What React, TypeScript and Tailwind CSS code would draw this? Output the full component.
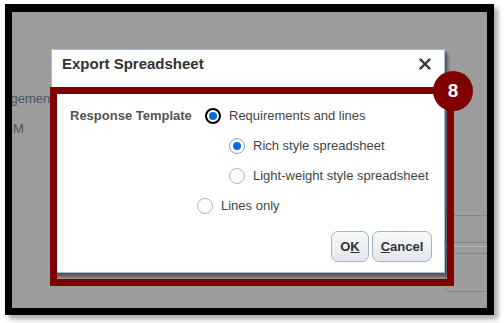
import React from "react";

function Radio({ checked, focused }: { checked?: boolean; focused?: boolean }) {
  const border = focused
    ? "border-2 border-black"
    : checked
    ? "border border-[#8ea2b6]"
    : "border border-[#aab6c2]";
  return (
    <span
      className={`flex h-[16px] w-[16px] shrink-0 items-center justify-center rounded-full bg-white ${border}`}
    >
      {checked && <span className="h-[8px] w-[8px] rounded-full bg-[#0a6cd6]" />}
    </span>
  );
}

export default function App() {
  return (
    <div
      className="h-[323px] w-[504px] overflow-hidden bg-white pt-[4px] pl-[5px]"
      style={{ fontFamily: '"Liberation Sans", Arial, sans-serif' }}
    >
      <div className="h-[311px] w-[489px] border-[7px] border-t-[8px] border-black shadow-[4px_4px_5px_rgba(0,0,0,0.35)]">
        <div className="relative h-full w-full overflow-hidden bg-[#9c9c9c]">
          {/* background page content */}
          <div className="flex h-full justify-between">
            <div className="flex flex-col pt-[79px] text-[13px] leading-[16px] text-[#4b5561]">
              <span className="ml-[-34px] whitespace-nowrap">Management</span>
              <span className="ml-[1px] mt-[14px]">M</span>
            </div>
            <div className="flex w-[42px] flex-col pt-[203px]">
              <div className="h-[28px] border-l border-t border-b border-[#858585]" />
              <div className="mt-[3px] h-[7px] border-t border-[#b3b3b3]" />
              <div className="h-[39px] rounded-bl-[5px] border-l border-b border-t border-[#858585]" />
            </div>
          </div>

          {/* dialog */}
          <div className="absolute left-[39px] top-[37px] flex w-[394px] flex-col border border-[#a9bccd] bg-white shadow-[3px_4px_3px_rgba(0,0,0,0.45)]">
            <div className="flex h-[37px] items-start justify-between pl-[10px] pr-[13px] pt-[5px]">
              <span className="text-[15px] font-bold leading-[18px] text-[#333]">Export Spreadsheet</span>
              <svg width="12" height="12" viewBox="0 0 12 12" className="mt-[3px]">
                <path d="M1.5 1.5 L10.5 10.5 M10.5 1.5 L1.5 10.5" stroke="#333" strokeWidth="2.4" strokeLinecap="round" />
              </svg>
            </div>
            <div className="flex flex-col pl-[18px] pr-[12px] pt-[14px] pb-[10px] text-[13px] leading-[16px] text-[#444]">
              <div className="flex h-[30px] items-center">
                <span className="w-[135px] font-bold text-[#555]">Response Template</span>
                <Radio checked focused />
                <span className="ml-[8px]">Requirements and lines</span>
              </div>
              <div className="ml-[159px] flex h-[30px] items-center">
                <Radio checked />
                <span className="ml-[8px]">Rich style spreadsheet</span>
              </div>
              <div className="ml-[159px] flex h-[30px] items-center">
                <Radio />
                <span className="ml-[8px]">Light-weight style spreadsheet</span>
              </div>
              <div className="ml-[127px] flex h-[30px] items-center">
                <Radio />
                <span className="ml-[8px]">Lines only</span>
              </div>
              <div className="mt-[10px] flex justify-end gap-[3px]">
                <button className="flex h-[31px] w-[38px] items-center justify-center rounded-[7px] border border-[#a3b3c3] bg-gradient-to-b from-[#f7f9fb] to-[#e3e8ed] text-[13px] font-bold text-[#333]">
                  O<span className="underline">K</span>
                </button>
                <button className="flex h-[31px] w-[60px] items-center justify-center rounded-[7px] border border-[#a3b3c3] bg-gradient-to-b from-[#f7f9fb] to-[#e3e8ed] text-[13px] font-bold text-[#333]">
                  <span className="underline">C</span>ancel
                </button>
              </div>
            </div>
          </div>

          {/* highlight box */}
          <div className="absolute left-[38px] top-[75px] h-[199px] w-[404px] border-[7px] border-[#800000]" />
          <div className="absolute left-[421px] top-[59px] flex h-[40px] w-[40px] items-center justify-center rounded-full bg-[#800000] text-[19px] font-bold text-white">
            8
          </div>
        </div>
      </div>
    </div>
  );
}
